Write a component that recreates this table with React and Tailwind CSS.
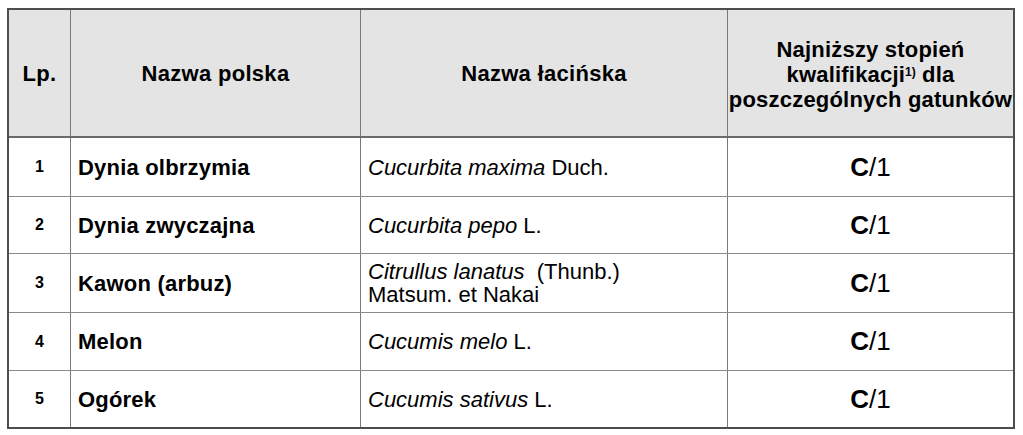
export default function App() {
  const rows = [
    { n: "1", pl: "Dynia olbrzymia", lat: <span><i>Cucurbita maxima</i> Duch.</span>, h: "h-[59px]" },
    { n: "2", pl: "Dynia zwyczajna", lat: <span><i>Cucurbita pepo</i> L.</span>, h: "h-[57px]" },
    { n: "3", pl: "Kawon (arbuz)", lat: <span className="block leading-[23px]"><i>Citrullus lanatus</i>{"\u00a0 "}(Thunb.)<br />Matsum. et Nakai</span>, h: "h-[59px]" },
    { n: "4", pl: "Melon", lat: <span><i>Cucumis melo</i> L.</span>, h: "h-[58px]" },
    { n: "5", pl: "Ogórek", lat: <span><i>Cucumis sativus</i> L.</span>, h: "h-[56px]", last: true },
  ];
  return (
    <div className="min-h-[435px] w-[1023px] bg-white pt-[8px] pl-[7px] text-black" style={{ fontFamily: '"Liberation Sans", Arial, sans-serif' }}>
      <div className="w-[1008px] border-2 border-[#4d4d4d]">
        <div className="grid grid-cols-[62px_290px_367px_285px] h-[128px] bg-[#e4e4e4] border-b-2 border-[#6a6a6a] font-bold text-[22px] tracking-[0.3px]">
          <div className="flex items-center justify-center border-r border-[#7a7a7a]">Lp.</div>
          <div className="flex items-center justify-center border-r border-[#7a7a7a]">Nazwa polska</div>
          <div className="flex items-center justify-center border-r border-[#7a7a7a]">Nazwa łacińska</div>
          <div className="flex items-center justify-center text-center leading-[25px] whitespace-nowrap pt-[2px] tracking-[0.2px]">
            <span>
              Najniższy stopień<br />
              kwalifikacji<sup className="text-[12px] leading-[0] relative -top-[6px] tracking-normal">1)</sup> dla<br />
              poszczególnych gatunków
            </span>
          </div>
        </div>
        {rows.map((r) => (
          <div key={r.n} className={`grid grid-cols-[62px_290px_367px_285px] ${r.h} ${r.last ? "" : "border-b border-[#8a8a8a]"}`}>
            <div className="flex items-center justify-center border-r border-[#7a7a7a] font-bold text-[16px]">{r.n}</div>
            <div className="flex items-center pl-[7px] border-r border-[#7a7a7a] font-bold text-[22px] tracking-[0.2px]">{r.pl}</div>
            <div className="flex items-center pl-[7px] border-r border-[#7a7a7a] text-[22px] leading-[23px]">{r.lat}</div>
            <div className="flex items-center justify-center text-[26px]">
              <span><b>C</b>/1</span>
            </div>
          </div>
        ))}
      </div>
    </div>
  );
}
